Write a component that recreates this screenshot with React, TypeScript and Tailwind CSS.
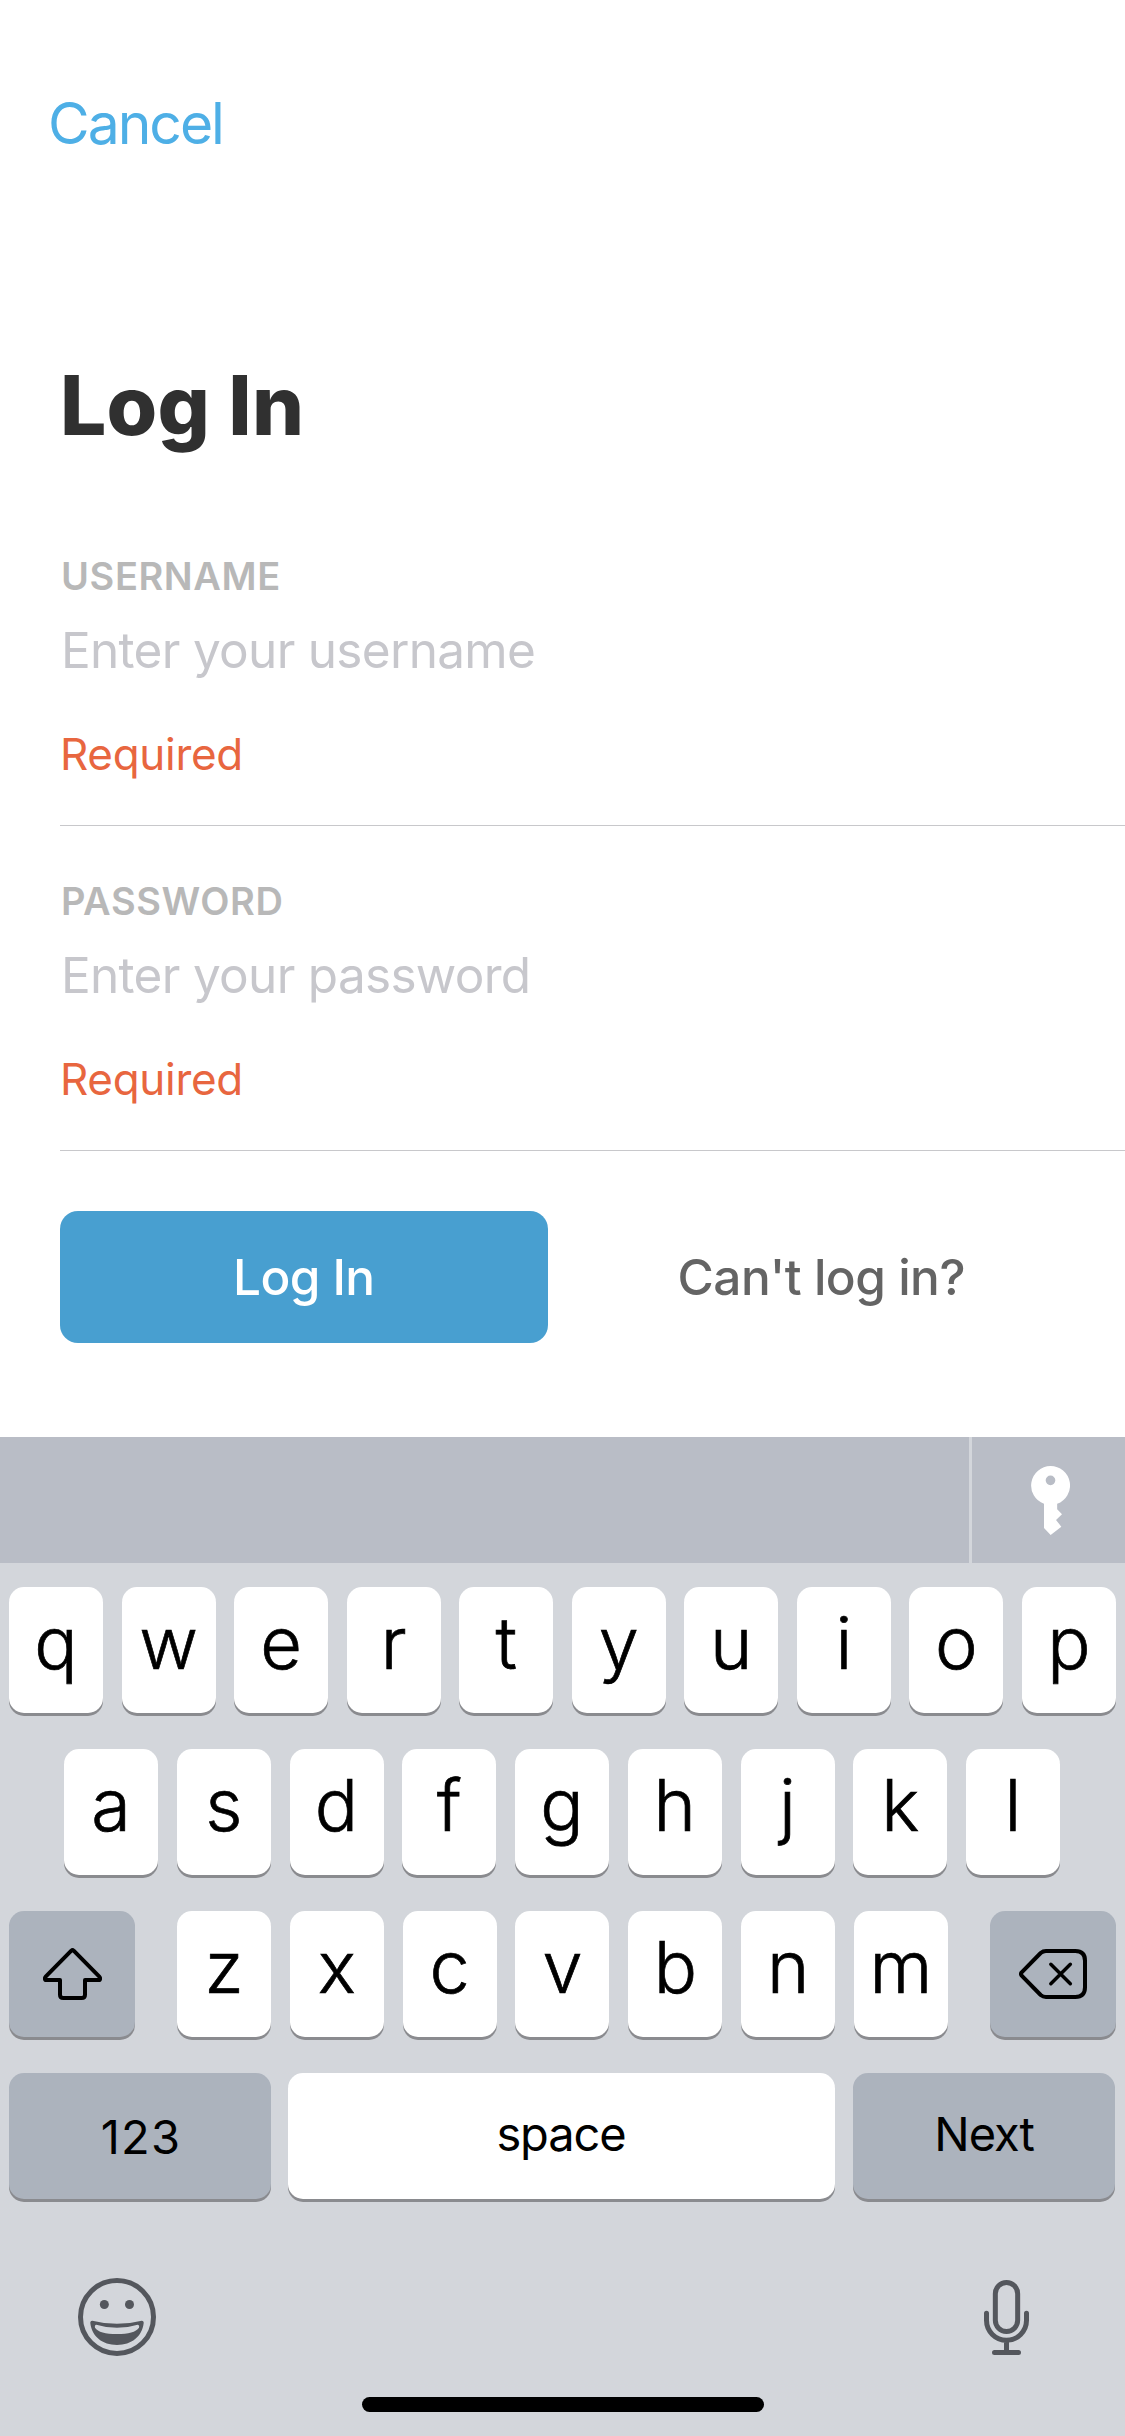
import type { ReactNode } from "react";

function KeyIcon() {
  return (
    <svg width="39" height="69" viewBox="273 138 117 207" className="ml-1" fill="#fff">
      <path
        fillRule="evenodd"
        d="M331.500 138a58.500 58.500 0 0 1 20 113.500V268L366 283L348 300L364 320L332 345L312 324V251.500A58.500 58.500 0 0 1 331.500 138ZM331.500 166.500a14.500 14.500 0 1 0 0 29a14.500 14.500 0 1 0 0-29Z"
      />
    </svg>
  );
}

function ShiftIcon() {
  return (
    <svg width="59" height="52" viewBox="129 174 177 156" fill="none" stroke="#000" strokeWidth="12" strokeLinejoin="round">
      <path d="M214 182Q217.500 179 221 182L298 260Q302 265 299 270H255V314Q255 324 245 324H190Q180 324 180 314V270H136Q133 265 137 260Z" />
    </svg>
  );
}

function BackspaceIcon() {
  return (
    <svg width="68" height="50" viewBox="357 177 204 150" fill="none" stroke="#000" strokeLinecap="round" strokeLinejoin="round">
      <path
        strokeWidth="12"
        d="M438 183H526Q555 183 555 212V292Q555 321 526 321H438Q429 321 422 315L365 257Q361 252 365 247L422 189Q429 183 438 183Z"
      />
      <path strokeWidth="10.500" d="M452.500 223L511 281M511 223L452.500 281" />
    </svg>
  );
}

function EmojiIcon() {
  return (
    <svg width="78" height="78" viewBox="84 84 234 234" fill="#54575d">
      <circle cx="201" cy="201" r="109.500" fill="none" stroke="#54575d" strokeWidth="15" />
      <circle cx="163" cy="163.500" r="13.500" />
      <circle cx="238.500" cy="163.500" r="13.500" />
      <path d="M127 212Q201 231 275 212Q282 212 281 220C276 260 245 285 201 285C157 285 126 260 121 220Q120 212 127 212Z" />
      <path
        fill="#d3d6db"
        d="M139 224Q201 243 263 224Q269 225 267 233C258 246 236 252 201 252C166 252 144 246 135 233Q133 225 139 224Z"
      />
    </svg>
  );
}

function MicIcon() {
  return (
    <svg width="45" height="75" viewBox="72 90 135 225" fill="none" stroke="#54575d" strokeWidth="15" strokeLinecap="round">
      <rect x="106" y="97.500" width="67" height="147" rx="33.500" />
      <path d="M79.500 190V211A60 60 0 0 0 199.500 211V190M139.500 271V307.500M103.500 307.500H175.500" />
    </svg>
  );
}

function Field({ label, placeholder, error }: { label: string; placeholder: string; error: string }) {
  return (
    <div className="flex flex-col border-b border-[#c8c8cb] pb-[46px]">
      <label className="pl-px text-[38px] leading-[40px] font-semibold tracking-[0.6px] text-[#b8b8b8]">{label}</label>
      <p className="mt-6 pl-px text-[49.5px] leading-[60px] tracking-[-0.7px] text-[#c7c7cc]">{placeholder}</p>
      <p className="mt-[49px] text-[44px] leading-[50px] tracking-[-0.3px] text-[#e8663f]">{error}</p>
    </div>
  );
}

function LetterKey({ children }: { children: string }) {
  return (
    <button className="flex h-[126px] w-[94px] items-center justify-center rounded-[15px] bg-white pb-[14px] text-[72px] font-light leading-none shadow-[0_3px_0_#8a8b8f] [-webkit-text-stroke:0.7px_#000]">
      {children}
    </button>
  );
}

function IconKey({ children }: { children: ReactNode }) {
  return (
    <button className="flex h-[126px] w-[126px] items-center justify-center rounded-[15px] bg-[#acb3bd] shadow-[0_3px_0_#8a8b8f]">
      {children}
    </button>
  );
}

function Letters({ keys }: { keys: string }) {
  return (
    <>
      {keys.split("").map((k) => (
        <LetterKey key={k}>{k}</LetterKey>
      ))}
    </>
  );
}

export default function App() {
  return (
    <div className="flex h-[2436px] w-[1125px] flex-col overflow-hidden bg-white font-[Inter,sans-serif] text-black">
      <header className="pt-[94px] pl-12">
        <button className="block text-[57px] leading-[60px] tracking-[-2px] text-[#4eafe6]">Cancel</button>
      </header>

      <main className="flex flex-1 flex-col pt-[202px] pl-[60px]">
        <h1 className="text-[82px] leading-[100px] font-extrabold tracking-[0.2px] text-[#303030]">Log In</h1>
        <div className="mt-[100px] flex flex-col gap-[55px]">
          <Field label="USERNAME" placeholder="Enter your username" error="Required" />
          <Field label="PASSWORD" placeholder="Enter your password" error="Required" />
        </div>
        <div className="mt-[60px] mr-[60px] grid grid-cols-2 gap-[30px]">
          <button className="flex h-[132px] items-center justify-center rounded-[18px] bg-[#489fd0] pt-[2px] text-[49.5px] leading-none font-medium tracking-[-0.6px] text-white">
            Log In
          </button>
          <button className="flex h-[132px] items-center justify-center pt-[2px] text-[49.5px] leading-none font-medium tracking-[-0.5px] text-[#646464]">
            Can't log in?
          </button>
        </div>
      </main>

      <section className="flex h-[999px] flex-col bg-[#d3d6db]">
        <div className="flex h-[126px] bg-[#b9bdc6]">
          <div className="flex-1" />
          <button className="flex w-[156px] items-center justify-center border-l-[3px] border-[#d3d6db]">
            <KeyIcon />
          </button>
        </div>

        <div className="flex flex-col gap-9 px-[9px] pt-6">
          <div className="flex justify-between">
            <Letters keys="qwertyuiop" />
          </div>
          <div className="flex justify-between pr-[56px] pl-[55px]">
            <Letters keys="asdfghjkl" />
          </div>
          <div className="flex justify-between">
            <IconKey>
              <ShiftIcon />
            </IconKey>
            <div className="flex w-[771px] justify-between">
              <Letters keys="zxcvbnm" />
            </div>
            <IconKey>
              <BackspaceIcon />
            </IconKey>
          </div>
          <div className="flex text-[47px] leading-none">
            <button className="flex h-[126px] w-[262px] items-center justify-center rounded-[15px] bg-[#acb3bd] pl-[2px] tracking-[1.2px] shadow-[0_3px_0_#8a8b8f]">
              123
            </button>
            <button className="ml-[17px] flex h-[126px] w-[547px] items-center justify-center rounded-[15px] bg-white pr-px pb-[6px] tracking-[-1.1px] shadow-[0_3px_0_#8a8b8f]">
              space
            </button>
            <button className="ml-[18px] flex h-[126px] w-[262px] items-center justify-center rounded-[15px] bg-[#acb3bd] pb-[6px] tracking-[-1.1px] shadow-[0_3px_0_#8a8b8f]">
              Next
            </button>
          </div>
        </div>

        <div className="mt-[79px] flex items-center justify-between pr-24 pl-[78px]">
          <EmojiIcon />
          <MicIcon />
        </div>
        <div className="mt-auto mb-6 ml-[362px] h-[15px] w-[402px] rounded-full bg-black" />
      </section>
    </div>
  );
}
